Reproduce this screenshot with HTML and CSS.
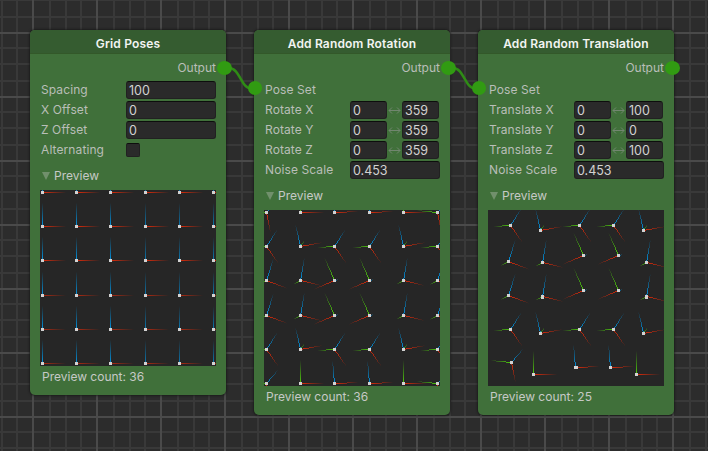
FILE: index.html
```html
<!DOCTYPE html>
<html lang="en">
<head>
<meta charset="utf-8">
<title>Pose Graph</title>
<link rel="stylesheet" href="styles.css">
</head>
<body>
<main class="graph">
  <section class="node node-grid">
    <h2 class="title">Grid Poses</h2>
    <div class="row output">Output<i class="port port-out"></i></div>
    <div class="row"><span class="label">Spacing</span><span class="field">100</span></div>
    <div class="row"><span class="label">X Offset</span><span class="field">0</span></div>
    <div class="row"><span class="label">Z Offset</span><span class="field">0</span></div>
    <div class="row"><span class="label">Alternating</span><span class="check"></span></div>
    <div class="foldout"><i class="triangle"></i>Preview</div>
    <canvas class="preview" id="grid" width="176" height="176"></canvas>
    <div class="count">Preview count: 36</div>
  </section>

  <section class="node node-rotation">
    <h2 class="title">Add Random Rotation</h2>
    <div class="row output">Output<i class="port port-out"></i></div>
    <div class="row"><span class="label">Pose Set</span><i class="port port-in"></i></div>
    <div class="row"><span class="label">Rotate X</span><span class="field half">0</span><svg class="range" viewBox="0 0 15 18"><path d="M2 9.500h11M5 6.500L2 9.500L5 12.500M10 6.500l3 3L10 12.500"/></svg><span class="field half">359</span></div>
    <div class="row"><span class="label">Rotate Y</span><span class="field half">0</span><svg class="range" viewBox="0 0 15 18"><path d="M2 9.500h11M5 6.500L2 9.500L5 12.500M10 6.500l3 3L10 12.500"/></svg><span class="field half">359</span></div>
    <div class="row"><span class="label">Rotate Z</span><span class="field half">0</span><svg class="range" viewBox="0 0 15 18"><path d="M2 9.500h11M5 6.500L2 9.500L5 12.500M10 6.500l3 3L10 12.500"/></svg><span class="field half">359</span></div>
    <div class="row"><span class="label">Noise Scale</span><span class="field">0.453</span></div>
    <div class="foldout"><i class="triangle"></i>Preview</div>
    <canvas class="preview" id="rotation" width="176" height="176"></canvas>
    <div class="count">Preview count: 36</div>
  </section>

  <section class="node node-translation">
    <h2 class="title">Add Random Translation</h2>
    <div class="row output">Output<i class="port port-out"></i></div>
    <div class="row"><span class="label">Pose Set</span><i class="port port-in"></i></div>
    <div class="row"><span class="label">Translate X</span><span class="field half">0</span><svg class="range" viewBox="0 0 15 18"><path d="M2 9.500h11M5 6.500L2 9.500L5 12.500M10 6.500l3 3L10 12.500"/></svg><span class="field half">100</span></div>
    <div class="row"><span class="label">Translate Y</span><span class="field half">0</span><svg class="range" viewBox="0 0 15 18"><path d="M2 9.500h11M5 6.500L2 9.500L5 12.500M10 6.500l3 3L10 12.500"/></svg><span class="field half">0</span></div>
    <div class="row"><span class="label">Translate Z</span><span class="field half">0</span><svg class="range" viewBox="0 0 15 18"><path d="M2 9.500h11M5 6.500L2 9.500L5 12.500M10 6.500l3 3L10 12.500"/></svg><span class="field half">100</span></div>
    <div class="row"><span class="label">Noise Scale</span><span class="field">0.453</span></div>
    <div class="foldout"><i class="triangle"></i>Preview</div>
    <canvas class="preview" id="translation" width="176" height="176"></canvas>
    <div class="count">Preview count: 25</div>
  </section>

  <svg class="edges" viewBox="0 0 708 451">
    <path d="M224 68H229C240 68 241 88.500 251 88.500H255.500"/>
    <path d="M448 68H453C464 68 465 88.500 475 88.500H479.500"/>
  </svg>
</main>
<script src="previews.js"></script>
</body>
</html>
```
FILE: styles.css
```css
body {
  margin: 0;
  background: #2c2c2c;
  color: #c6c9c6;
  font: 12px/20px Inter, "Liberation Sans", sans-serif;
}

.graph {
  --minor: #393939;
  position: relative;
  box-sizing: border-box;
  width: 708px;
  height: 451px;
  padding: 30px;
  display: flex;
  align-items: flex-start;
  gap: 28px;
  overflow: hidden;
  background-image:
    linear-gradient(90deg, #4a4a4a 2px, transparent 2px),
    linear-gradient(#4a4a4a 2px, transparent 2px),
    linear-gradient(90deg, transparent 17px, var(--minor) 17px 19px, transparent 19px 33px, var(--minor) 33px 35px, transparent 35px 48px, var(--minor) 48px 50px, transparent 50px),
    linear-gradient(transparent 15px, var(--minor) 15px 17px, transparent 17px 31px, var(--minor) 31px 33px, transparent 33px 48px, var(--minor) 48px 50px, transparent 50px);
  background-size: 64px 64px;
  background-position: 32px 32px;
}

.node {
  position: relative;
  box-sizing: border-box;
  flex: 0 0 196px;
  height: 385px;
  border-radius: 5px;
  background: #40703a;
  box-shadow: 0 0 2px 1px rgba(20, 20, 20, .65);
}

.node-grid {
  height: 365px;
}

.title {
  box-sizing: border-box;
  height: 24px;
  margin: 0 0 4px;
  padding-top: 2px;
  border-bottom: 1px solid #335829;
  border-radius: 5px 5px 0 0;
  background: #355c30;
  color: #f2f4f2;
  font-size: 12px;
  font-weight: 600;
  letter-spacing: .17px;
  line-height: 24px;
  text-align: center;
}

.row {
  position: relative;
  display: flex;
  align-items: center;
  height: 20px;
  padding: 0 10px 0 11px;
  color: #b9beb8;
}

.output {
  justify-content: flex-end;
  margin-bottom: 2px;
}

.label {
  width: 85px;
  letter-spacing: .1px;
}

.field {
  box-sizing: border-box;
  width: 90px;
  height: 18px;
  padding-left: 2px;
  border: 1px solid #212121;
  border-top-color: #0d0d0d;
  border-radius: 3px;
  background: #2a2a2a;
  color: #d2d2d2;
  line-height: 17px;
  font-size: 12.500px;
}

.half {
  width: 37px;
}

.range {
  width: 15px;
  height: 18px;
  fill: none;
  stroke: #71866f;
  stroke-width: 1;
}

.check {
  box-sizing: border-box;
  width: 14px;
  height: 14px;
  margin-top: -1px;
  border: 1px solid #212121;
  border-top-color: #0d0d0d;
  border-radius: 2px;
  background: #2a2a2a;
}

.port {
  position: absolute;
  z-index: 2;
  top: 3px;
  width: 14px;
  height: 14px;
  border-radius: 50%;
  background: #319b12;
}

.port-out {
  right: -6px;
  width: 15px;
}

.port-in {
  top: 1px;
  left: -6px;
}

.foldout {
  display: flex;
  align-items: center;
  gap: 4px;
  height: 30px;
  padding: 2px 0 0 12px;
  box-sizing: border-box;
}

.triangle {
  width: 8px;
  height: 8px;
  background: #71906c;
  clip-path: polygon(0 0, 100% 0, 50% 100%);
}

.preview {
  display: block;
  width: 176px;
  height: 176px;
  margin-left: 10px;
}

.count {
  height: 20px;
  padding: 1px 12px 0;
}

.edges {
  position: absolute;
  inset: 0;
  width: 708px;
  height: 451px;
  fill: none;
  stroke: #2f8b16;
  stroke-width: 2.500;
  pointer-events: none;
}
```
FILE: previews.js
```javascript
const COLORS = { r: "#e32a08", g: "#4fd00c", b: "#0096e6" };

// Axis vectors of each pose orientation, in preview pixels.
const POSES = {
  flat: { r: [24, 0], b: [0, -24] },
  dive: { g: [-21, -2], b: [12, -14], r: [4, 20] },
  side: { r: [24, 0], g: [0, -24] },
  lean: { r: [24, -1], b: [-2, -23] },
  fork: { g: [-17, 1], b: [11, -17], r: [12, 17] },
  tilt: { g: [4, -6], b: [-5, -22], r: [22, -4] },
  fall: { g: [-8, 4], b: [7, -22], r: [21, 8] },
  kite: { g: [-7, 4], b: [4, -23], r: [21, 5] },
  flip: { b: [4, -1], g: [-10, -23], r: [-21, 9] }
};

function drawAxis(ctx, x, y, [dx, dy], color, strength) {
  const steps = Math.max(Math.abs(dx), Math.abs(dy));
  ctx.fillStyle = color;
  for (let i = 0; i < steps; i++) {
    ctx.globalAlpha = strength * Math.pow(1 - i / steps, 1.05);
    ctx.fillRect(Math.round(x + dx * i / steps), Math.round(y + dy * i / steps), 1, 1);
  }
  ctx.globalAlpha = 1;
}

function drawPreview(id, poses) {
  const ctx = document.getElementById(id).getContext("2d");
  ctx.fillStyle = "#262626";
  ctx.fillRect(0, 0, 176, 176);
  for (const [x, y, kind] of poses) {
    for (const axis of Object.keys(POSES[kind])) {
      const soft = kind === "flat" && ((axis === "r" && y > 100) || (axis === "b" && x > 100));
      drawAxis(ctx, x, y, POSES[kind][axis], COLORS[axis], soft ? 0.75 : 1);
    }
  }
  ctx.fillStyle = "#d2d2d2";
  for (const [x, y, , w = 3, h = 3] of poses) ctx.fillRect(x - 1, y - 1, w, h);
}

const STOPS = [2, 36, 70, 105, 139, 173];
const ROTATED = [
  ["dive", "side", "lean", "lean", "side", "dive"],
  ["fork", "tilt", "fork", "fork", "tilt", "fork"],
  ["fall", "kite", "flip", "flip", "kite", "fall"],
  ["fall", "kite", "flip", "flip", "kite", "fall"],
  ["fork", "tilt", "fork", "fork", "tilt", "fork"],
  ["dive", "side", "lean", "lean", "side", "dive"]
];

drawPreview("grid", STOPS.flatMap(y => STOPS.map(x => [x, y, "flat"])));
drawPreview("rotation", STOPS.flatMap((y, r) => STOPS.map((x, c) => [x, y, ROTATED[r][c]])));
drawPreview("translation", [
  [22, 15, "fork"], [52, 20, "tilt"], [91, 15, "fork"], [125, 15, "fork"], [155, 20, "tilt"],
  [20, 51, "fall"], [54, 52, "kite"], [95, 45, "flip"], [130, 45, "flip"], [158, 52, "kite"],
  [20, 85, "fall"], [54, 86, "kite", 3, 4], [95, 80, "flip"], [130, 80, "flip"], [158, 86, "kite", 3, 4],
  [22, 119, "fork"], [52, 123, "tilt"], [91, 119, "fork"], [125, 119, "fork"], [155, 123, "tilt"],
  [23, 152, "dive"], [45, 164, "side"], [87, 157, "lean", 4, 3], [122, 157, "lean"], [148, 164, "side"]
]);
```
